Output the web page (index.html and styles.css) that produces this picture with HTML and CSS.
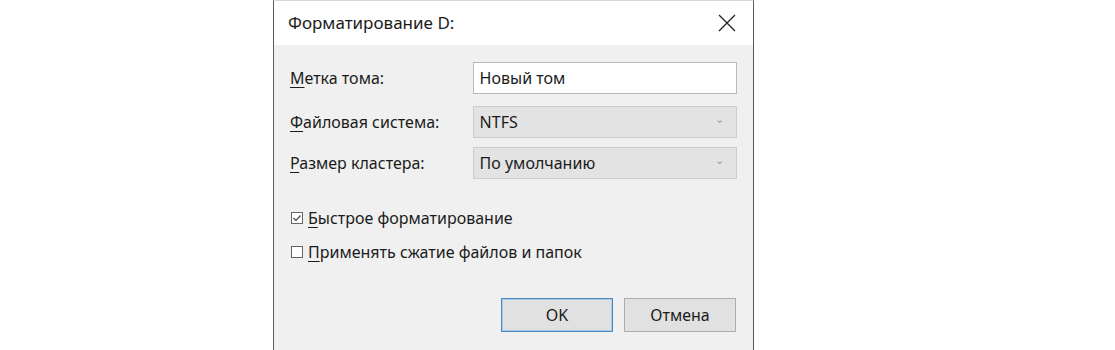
FILE: index.html
```html
<!DOCTYPE html>
<html lang="ru">
<head>
  <meta charset="UTF-8">
  <title>Форматирование D:</title>
  <link rel="stylesheet" href="styles.css">
</head>
<body>

<div class="stage">
  <div class="dialog">
    <div class="titlebar">
      <span class="title">Форматирование D:</span>
      <svg class="close" width="18" height="18" viewBox="0 0 18 18">
        <path d="M1 1 L17 17 M17 1 L1 17" stroke="#222" stroke-width="1.3" fill="none"/>
      </svg>
    </div>

    <div class="body">
      <div class="row row-first">
        <label class="label"><u>М</u>етка тома:</label>
        <div class="field input">Новый том</div>
      </div>
      <div class="row row-second">
        <label class="label"><u>Ф</u>айловая система:</label>
        <div class="field select">NTFS<span class="chev">&#8964;</span></div>
      </div>
      <div class="row row-third">
        <label class="label"><u>Р</u>азмер кластера:</label>
        <div class="field select">По умолчанию<span class="chev">&#8964;</span></div>
      </div>

      <div class="check check-first">
        <svg class="box" width="12" height="12" viewBox="0 0 12 12">
          <rect x="0.5" y="0.5" width="11" height="11" fill="#fff" stroke="#666"/>
          <path d="M2.5 6 L5 8.5 L9.5 3.5" stroke="#444" stroke-width="1.2" fill="none"/>
        </svg>
        <span><u>Б</u>ыстрое форматирование</span>
      </div>
      <div class="check">
        <svg class="box" width="12" height="12" viewBox="0 0 12 12">
          <rect x="0.5" y="0.5" width="11" height="11" fill="#fff" stroke="#666"/>
        </svg>
        <span><u>П</u>рименять сжатие файлов и папок</span>
      </div>

      <div class="buttons">
        <div class="btn btn-default">OK</div>
        <div class="btn">Отмена</div>
      </div>
    </div>
  </div>
</div>

</body>
</html>
```

FILE: styles.css
```css
body {
  margin: 0;
  background-color: #ffffff;
  font-family: "Noto Sans", "Liberation Sans", sans-serif;
  color: #1b1b1b;
  overflow: hidden;
}
.stage {
  padding-left: 273px;
}
.dialog {
  width: 479px;
  height: 349px;
  overflow: hidden;
  background-color: #f0f0f0;
  border-left: 1px solid #5a5a5a;
  border-right: 1px solid #5a5a5a;
  border-top: 1px solid #d8d8d8;
}
.titlebar {
  height: 44px;
  background-color: #ffffff;
  display: flex;
  align-items: center;
  justify-content: space-between;
  padding: 0 17px 0 14px;
}
.title {
  font-size: 17px;
  margin-top: -1px;
}
.close {
  margin-top: -1px;
}
.body {
  padding: 17px 16px 0 16px;
}
.row {
  display: flex;
  align-items: center;
}
.row-second {
  margin-top: 12px;
}
.row-third {
  margin-top: 9px;
}
.label {
  width: 183px;
  font-size: 16px;
}
.label u, .check u {
  text-decoration-thickness: 1px;
  text-underline-offset: 3px;
}
.field {
  height: 30px;
  display: flex;
  align-items: center;
  justify-content: space-between;
  padding: 0 0 0 6px;
  font-size: 16px;
}
.input {
  width: 257px;
  background-color: #ffffff;
  border: 1px solid #b9b9b9;
}
.select {
  width: 257px;
  background-color: #e3e3e3;
  border: 1px solid #cdcdcd;
}
.chev {
  color: #9a9a9a;
  font-size: 11px;
  margin-right: 12px;
  margin-top: -8px;
}
.check {
  display: flex;
  align-items: center;
  font-size: 16px;
  margin-top: 12px;
  margin-left: 1px;
}
.check-first {
  margin-top: 28px;
}
.box {
  margin-right: 5px;
}
.buttons {
  display: flex;
  justify-content: flex-end;
  gap: 11px;
  margin-top: 35px;
  padding-right: 1px;
}
.btn {
  width: 110px;
  height: 32px;
  display: flex;
  align-items: center;
  justify-content: center;
  background-color: #e1e1e1;
  border: 1px solid #adadad;
  font-size: 16px;
}
.btn-default {
  border: 1px solid #4a8bc6;
  box-shadow: inset 0 0 0 1px #a9c9e6;
}
```
